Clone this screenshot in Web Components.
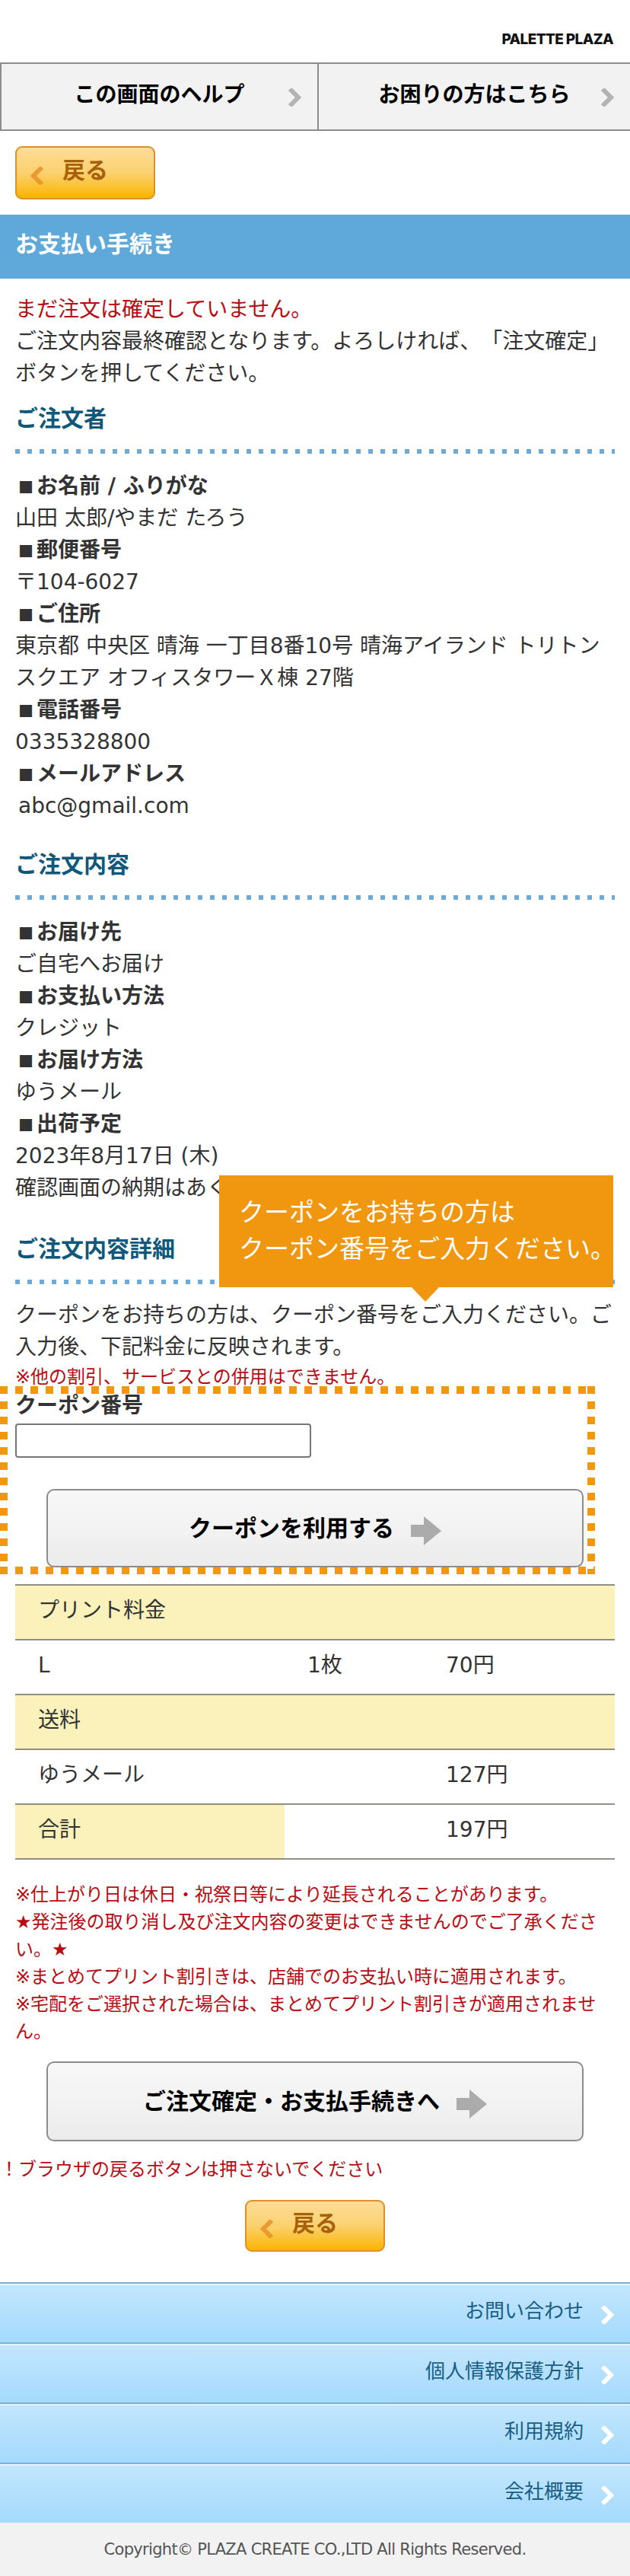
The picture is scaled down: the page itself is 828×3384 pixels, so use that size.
<!DOCTYPE html>
<html lang="ja">
<head>
<meta charset="utf-8">
<title>お支払い手続き</title>
<style>
	html, body { margin: 0; padding: 0; background: #fff; }
	body {
		width: 828px;
		font-family: "DejaVu Sans", "Noto Sans CJK JP", sans-serif;
		font-size: 28px;
		line-height: 42px;
		color: #333;
		text-spacing-trim: space-all;
	}
</style>
</head>
<body>
<site-header></site-header>
<help-nav></help-nav>
<back-button style="margin: 20px 0 20px 20px"></back-button>
<page-title>お支払い手続き</page-title>

<page-block style="padding-top: 20px">
	<span style="color:#b80c12">まだ注文は確定していません。</span><br>
	ご注文内容最終確認となります。よろしければ、「注文確定」ボタンを押してください。
</page-block>

<section-head style="margin-top: 15px">ご注文者</section-head>
<page-block style="padding-top: 22px">
	<info-label>お名前 / ふりがな</info-label>
	<div>山田 太郎/やまだ たろう</div>
	<info-label>郵便番号</info-label>
	<div>〒104-6027</div>
	<info-label>ご住所</info-label>
	<div>東京都 中央区 晴海 一丁目8番10号 晴海アイランド トリトンスクエア オフィスタワーＸ棟 27階</div>
	<info-label>電話番号</info-label>
	<div>0335328800</div>
	<info-label>メールアドレス</info-label>
	<div style="padding-left: 4px">abc@gmail.com</div>
</page-block>

<section-head style="margin-top: 33px">ご注文内容</section-head>
<page-block style="padding-top: 22px">
	<info-label>お届け先</info-label>
	<div>ご自宅へお届け</div>
	<info-label>お支払い方法</info-label>
	<div>クレジット</div>
	<info-label>お届け方法</info-label>
	<div>ゆうメール</div>
	<info-label>出荷予定</info-label>
	<div>2023年8月17日 (木)</div>
	<div>確認画面の納期はあくまで目安です。</div>
</page-block>

<coupon-tip>クーポンをお持ちの方は<br>クーポン番号をご入力ください。</coupon-tip>

<section-head style="margin-top: 36px">ご注文内容詳細</section-head>
<page-block style="padding-top: 20px">
	クーポンをお持ちの方は、クーポン番号をご入力ください。ご入力後、下記料金に反映されます。
	<div style="color:#b80c12; font-size:24px; line-height:36px">※他の割引、サービスとの併用はできません。</div>
</page-block>

<coupon-box></coupon-box>

<price-table style="margin-top: 13px">
	<price-row shade="all" a="プリント料金"></price-row>
	<price-row a="L" b="1枚" c="70円"></price-row>
	<price-row shade="all" a="送料"></price-row>
	<price-row a="ゆうメール" c="127円"></price-row>
	<price-row shade="first" a="合計" c="197円"></price-row>
</price-table>

<page-block style="padding-top: 28px; font-size: 24px; line-height: 36px; color: #b80c12">
	※仕上がり日は休日・祝祭日等により延長されることがあります。<br>
	★発注後の取り消し及び注文内容の変更はできませんのでご了承ください。★<br>
	※まとめてプリント割引きは、店舗でのお支払い時に適用されます。<br>
	※宅配をご選択された場合は、まとめてプリント割引きが適用されません。
</page-block>

<arrow-button style="margin: 21px 0 0 61px">ご注文確定・お支払手続きへ</arrow-button>
<div style="margin-top: 19px; font-size: 24px; line-height: 36px; color: #b80c12">！ブラウザの戻るボタンは押さないでください</div>
<back-button style="margin: 22px 0 0 322px; height: 68px"></back-button>

<footer-links style="margin-top: 40px">
	<footer-link>お問い合わせ</footer-link>
	<footer-link>個人情報保護方針</footer-link>
	<footer-link>利用規約</footer-link>
	<footer-link>会社概要</footer-link>
</footer-links>
<site-footer>Copyright© PLAZA CREATE CO.,LTD All Rights Reserved.</site-footer>

<script>
	const chevron = (color, flip) => `
		<svg width="18" height="24" viewBox="0 0 18 24" style="${flip ? 'transform:scaleX(-1);' : ''}display:block">
			<polyline points="3,1 14,12 3,23" fill="none" stroke="${color}" stroke-width="6"/>
		</svg>`;

	const grayArrow = `
		<svg width="40" height="38" viewBox="0 0 40 38" style="display:block">
			<polygon points="0,11 17,11 17,0 40,19 17,38 17,27 0,27" fill="#ababab"/>
		</svg>`;

	// plain elements that only need a box and a slot
	const simpleElement = (name, css, html = '<slot></slot>') => {
		customElements.define(name, class extends HTMLElement {
			constructor() {
				super();
				const shadow = this.attachShadow({ mode: 'open' });
				shadow.innerHTML = `<style>${css}</style>${html}`;
			}
		});
	};

	simpleElement('site-header', `
		:host { display: flex; justify-content: flex-end; height: 82px; box-sizing: border-box; padding: 40px 22px 0 0; }
		span { font-family: Inter, sans-serif; font-weight: 800; font-size: 19px; line-height: 24px; letter-spacing: -.6px; color: #111; }
	`, '<span>PALETTE PLAZA</span>');

	simpleElement('help-nav', `
		:host { display: grid; grid-template-columns: 415px 1fr; height: 90px; box-sizing: border-box;
			border-top: 2px solid #8c8c8c; border-bottom: 2px solid #8c8c8c; border-left: 2px solid #8c8c8c; background: #f2f2f2; }
		a { display: flex; align-items: center; justify-content: center; position: relative; padding-bottom: 4px;
			font-weight: 700; color: #000; }
		a + a { border-left: 2px solid #8c8c8c; }
		i { position: absolute; right: 21px; top: 32px; }
	`, `<a>この画面のヘルプ<i>${chevron('#b3b3b3')}</i></a><a>お困りの方はこちら<i>${chevron('#b3b3b3')}</i></a>`);

	simpleElement('back-button', `
		:host { display: flex; align-items: center; width: 184px; height: 70px; box-sizing: border-box;
			padding: 0 0 6px 18px; gap: 24px; border: 2px solid #df9128; border-radius: 9px;
			background: linear-gradient(#fddc98, #fbd16f 50%, #fab400); color: #a8610a; font-size: 30px; font-weight: 700; }
		i { margin-top: 14px; opacity: .85; }
	`, `<i>${chevron('#e8922c', true)}</i><span>戻る</span>`);

	simpleElement('page-title', `
		:host { display: block; height: 84px; box-sizing: border-box; padding: 16px 20px 0; background: #5fa9da;
			color: #fff; font-size: 30px; line-height: 45px; font-weight: 700; }
	`);

	simpleElement('page-block', `:host { display: block; padding: 0 20px; }`);

	simpleElement('section-head', `
		:host { display: block; padding: 0 20px; color: #0f587a; font-size: 30px; line-height: 45px; font-weight: 700; }
		div { height: 6px; margin-top: 18px;
			background: repeating-linear-gradient(to right, #6eaad6 0 6px, transparent 6px 16px); }
	`, '<slot></slot><div></div>');

	simpleElement('info-label', `
		:host { display: block; font-weight: 700; height: 42px; }
		b { display: inline-block; width: 28px; text-align: center; font-family: "Noto Sans CJK JP", sans-serif; font-size: 20px; line-height: 0; }
	`, '<b>■</b><slot></slot>');

	simpleElement('coupon-tip', `
		:host { display: block; position: absolute; left: 288px; top: 1544px; width: 518px; height: 147px; box-sizing: border-box;
			padding: 25px 0 0 26px; background: #f0960f; color: #fff; font-size: 33px; line-height: 48px; white-space: nowrap; }
		:host::after { content: ""; position: absolute; left: 253px; top: 147px; border-style: solid;
			border-width: 19px 18px 0; border-color: #f0960f transparent transparent; }
	`);

	simpleElement('arrow-button', `
		:host { display: flex; align-items: center; justify-content: center; gap: 22px; width: 706px; height: 105px; box-sizing: border-box;
			border: 2px solid #8c8c8c; border-radius: 10px; background: linear-gradient(#f8f8f8, #ececec);
			font-size: 30px; font-weight: 700; color: #000; }
		i { margin-top: 6px; }
	`, `<slot></slot><i>${grayArrow}</i>`);

	simpleElement('coupon-box', `
		:host { display: block; margin-top: -6px; width: 782px; height: 247px; box-sizing: border-box; padding: 10px;
			background:
				linear-gradient(to right, #f0980f 50%, transparent 0) 0 0 / 20px 10px repeat-x,
				linear-gradient(to right, #f0980f 50%, transparent 0) 0 100% / 20px 10px repeat-x,
				linear-gradient(#f0980f 50%, transparent 0) 0 0 / 10px 20px repeat-y,
				linear-gradient(#f0980f 50%, transparent 0) 100% 0 / 10px 20px repeat-y; }
		label { display: block; padding-left: 10px; font-weight: 700; line-height: 32px; }
		input { display: block; margin: 7px 0 41px 10px; width: 389px; height: 45px; box-sizing: border-box;
			border: 2px solid #767676; border-radius: 4px; background: #fff; }
		arrow-button { height: 103px; margin-left: 51px; }
	`, `<label>クーポン番号</label><input type="text"><arrow-button>クーポンを利用する</arrow-button>`);

	simpleElement('price-table', `
		:host { display: block; margin: 0 20px; border-top: 2px solid #8f8f84; }
	`);

	class PriceRow extends HTMLElement {
		constructor() {
			super();
			const shadow = this.attachShadow({ mode: 'open' });
			const shade = this.getAttribute('shade');
			shadow.innerHTML = `
				<style>
					:host { display: grid; grid-template-columns: 354px 182px 1fr; height: 72px; box-sizing: border-box;
						border-bottom: 2px solid #8f8f84; ${shade === 'all' ? 'background: #fbf1bb;' : ''} }
					div { padding: 0 0 0 30px; line-height: 66px; }
					.first { background: #fbf1bb; }
				</style>
				<div class="${shade === 'first' ? 'first' : ''}">${this.getAttribute('a') || ''}</div>
				<div>${this.getAttribute('b') || ''}</div>
				<div>${this.getAttribute('c') || ''}</div>`;
		}
	}
	customElements.define('price-row', PriceRow);

	simpleElement('footer-links', `:host { display: block; }`);

	simpleElement('footer-link', `
		:host { display: flex; align-items: center; justify-content: flex-end; height: 79px; box-sizing: border-box; padding: 0 61px 6px 0;
			position: relative; border-top: 2px solid #7eb0d2; box-shadow: inset 0 2px 0 #e4f4fe;
			background: linear-gradient(#c3e6fd, #a4dafc); color: #1a5e85; font-size: 26px; }
		i { position: absolute; right: 21px; top: 29px; }
	`, `<slot></slot><i>${chevron('#fff')}</i>`);

	simpleElement('site-footer', `
		:host { display: block; height: 70px; background: #f2f2f2; text-align: center; font-size: 21px; letter-spacing: -.7px; line-height: 70px; color: #555; }
	`);
</script>
</body>
</html>
